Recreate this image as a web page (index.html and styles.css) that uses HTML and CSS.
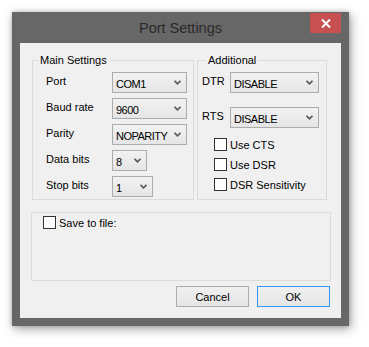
FILE: index.html
```html
<!DOCTYPE html>
<html lang="en">
<head>
    <meta charset="UTF-8">
    <title>Port Settings</title>
    <link rel="stylesheet" href="styles.css">
</head>
<body>
    <div class="window">
        <div class="titlebar">
            <span></span>
            <h1 class="title">Port Settings</h1>
            <button class="close" aria-label="Close">
                <svg width="10" height="9" viewBox="0 0 10 9"><path d="M1 0.5 L9 8.5 M9 0.5 L1 8.5" stroke="#fff" stroke-width="2"/></svg>
            </button>
        </div>

        <div class="client">
            <div class="top">
                <fieldset class="group main">
                    <legend>Main Settings</legend>
                    <div class="row">
                        <label>Port</label>
                        <div class="combo w75">COM1<svg class="arrow" width="7" height="5" viewBox="0 0 7 5"><polyline points="0.5,0.8 3.5,3.8 6.5,0.8"/></svg></div>
                    </div>
                    <div class="row">
                        <label>Baud rate</label>
                        <div class="combo w75">9600<svg class="arrow" width="7" height="5" viewBox="0 0 7 5"><polyline points="0.5,0.8 3.5,3.8 6.5,0.8"/></svg></div>
                    </div>
                    <div class="row">
                        <label>Parity</label>
                        <div class="combo w75">NOPARITY<svg class="arrow" width="7" height="5" viewBox="0 0 7 5"><polyline points="0.5,0.8 3.5,3.8 6.5,0.8"/></svg></div>
                    </div>
                    <div class="row">
                        <label>Data bits</label>
                        <div class="combo w35">8<svg class="arrow" width="7" height="5" viewBox="0 0 7 5"><polyline points="0.5,0.8 3.5,3.8 6.5,0.8"/></svg></div>
                    </div>
                    <div class="row">
                        <label>Stop bits</label>
                        <div class="combo w41">1<svg class="arrow" width="7" height="5" viewBox="0 0 7 5"><polyline points="0.5,0.8 3.5,3.8 6.5,0.8"/></svg></div>
                    </div>
                </fieldset>

                <fieldset class="group extra">
                    <legend>Additional</legend>
                    <div class="row">
                        <label class="short">DTR</label>
                        <div class="combo w89">DISABLE<svg class="arrow" width="7" height="5" viewBox="0 0 7 5"><polyline points="0.5,0.8 3.5,3.8 6.5,0.8"/></svg></div>
                    </div>
                    <div class="row rts">
                        <label class="short">RTS</label>
                        <div class="combo w89">DISABLE<svg class="arrow" width="7" height="5" viewBox="0 0 7 5"><polyline points="0.5,0.8 3.5,3.8 6.5,0.8"/></svg></div>
                    </div>
                    <div class="checks">
                        <div class="check"><span class="box"></span>Use CTS</div>
                        <div class="check"><span class="box"></span>Use DSR</div>
                        <div class="check"><span class="box"></span>DSR Sensitivity</div>
                    </div>
                </fieldset>
            </div>

            <div class="save-group">
                <div class="check"><span class="box"></span>Save to file:</div>
            </div>

            <div class="buttons">
                <button class="btn">Cancel</button>
                <button class="btn default">OK</button>
            </div>
        </div>
    </div>
</body>
</html>
```

FILE: styles.css
```css
* {
    margin: 0;
    padding: 0;
    box-sizing: border-box;
}

body {
    background: #fff;
    padding: 12px;
    font-family: 'Liberation Sans', Arial, sans-serif;
    font-size: 11px;
    color: #000;
}

.window {
    width: 337px;
    height: 314px;
    background: #676767;
    padding: 0 8px 8px;
    display: flex;
    flex-direction: column;
    box-shadow: 2px 3px 10px rgba(0,0,0,0.35), 0 0 4px rgba(0,0,0,0.2);
}

.titlebar {
    height: 31px;
    display: grid;
    grid-template-columns: 1fr auto 1fr;
    align-items: start;
}

.title {
    font-size: 14.5px;
    font-weight: normal;
    color: #2a2a2a;
    line-height: 15px;
    padding-top: 9px;
}

.close {
    justify-self: end;
    margin-top: 1px;
    width: 31px;
    height: 20px;
    border: none;
    background: #c75050;
    display: flex;
    align-items: center;
    justify-content: center;
}

.client {
    flex: 1;
    background: #f0f0f0;
}

.top {
    display: flex;
    margin-top: 11px;
}

.group {
    border: 1px solid #dcdcdc;
    height: 146px;
}

.group legend {
    line-height: 12px;
    padding: 0 2px;
}

.main {
    margin-left: 12px;
    width: 162px;
    padding: 6px 0 0 13px;
}

.main legend {
    margin-left: -8px;
}

.extra {
    margin-left: 3px;
    width: 130px;
    padding: 6px 0 0 4px;
}

.extra legend {
    margin-left: 4px;
}

.row {
    display: flex;
    height: 21px;
    margin-bottom: 5px;
}

.row label {
    width: 66px;
    padding-top: 3px;
}

.row label.short {
    width: 28px;
}

.row.rts {
    margin-top: 14px;
}

.combo {
    height: 21px;
    border: 1px solid #acacac;
    background: linear-gradient(#f2f2f2, #e5e5e5);
    display: flex;
    align-items: center;
    justify-content: space-between;
    padding: 2px 5px 0 3px;
    letter-spacing: -0.5px;
}

.arrow {
    margin-top: -2px;
}

.arrow polyline {
    fill: none;
    stroke: #5a5a5a;
    stroke-width: 1.7;
}

.w75 { width: 75px; }
.w35 { width: 35px; }
.w41 { width: 41px; }
.w89 { width: 89px; }

.checks {
    margin: 10px 0 0 12px;
    display: flex;
    flex-direction: column;
    gap: 7px;
}

.check {
    display: flex;
    align-items: center;
    height: 13px;
}

.box {
    width: 13px;
    height: 13px;
    border: 1px solid #333;
    background: #fff;
    margin-right: 3px;
}

.save-group {
    margin: 12px 0 0 11px;
    width: 300px;
    height: 69px;
    border: 1px solid #dcdcdc;
    padding: 3px 0 0 11px;
}

.buttons {
    display: flex;
    justify-content: flex-end;
    gap: 8px;
    margin-top: 5px;
    padding-right: 11px;
}

.btn {
    width: 73px;
    height: 21px;
    border: 1px solid #acacac;
    background: linear-gradient(#f0f0f0, #e5e5e5);
    font-family: 'Liberation Sans', Arial, sans-serif;
    font-size: 11px;
    color: #000;
}

.btn.default {
    border-color: #3399ff;
}
```
